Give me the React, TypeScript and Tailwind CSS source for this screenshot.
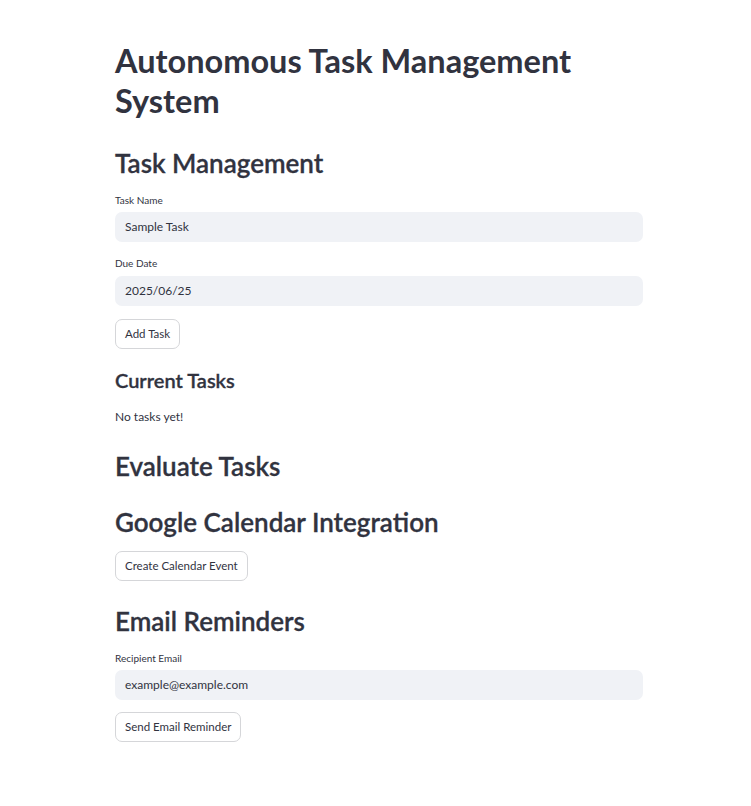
import React from "react";

const font = { fontFamily: "Lato, 'Noto Sans', sans-serif" };

function Label({ children }: { children: React.ReactNode }) {
  return <div className="text-[10px] leading-[14px] text-[#31333f] h-[14px]">{children}</div>;
}

function Input({ value }: { value: string }) {
  return (
    <div className="mt-[5px] h-[30px] w-full rounded-[7px] bg-[#f0f2f6] flex items-center px-[10px] text-[12px] text-[#31333f]">
      {value}
    </div>
  );
}

function Button({ children }: { children: React.ReactNode }) {
  return (
    <div className="inline-flex h-[30px] items-center rounded-[7px] border border-[#d5d6d9] bg-white px-[9px] text-[11.5px] text-[#31333f]">
      {children}
    </div>
  );
}

export default function App() {
  return (
    <div className="min-h-[806px] w-[751px] bg-white" style={font}>
      <div className="ml-[115px] w-[528px] pt-[41px] text-[#31333f]">
        <h1 className="text-[32.5px] font-bold leading-[40px]">Autonomous Task Management System</h1>
        <h2 className="mt-[26px] text-[26px] font-semibold leading-[32px] [-webkit-text-stroke:0.3px_#31333f]">Task Management</h2>
        <div className="mt-[14px]">
          <Label>Task Name</Label>
          <Input value="Sample Task" />
        </div>
        <div className="mt-[14px]">
          <Label>Due Date</Label>
          <div className="h-[1px]" />
          <Input value="2025/06/25" />
        </div>
        <div className="mt-[13px]">
          <Button>Add Task</Button>
        </div>
        <h3 className="mt-[17px] text-[20px] font-semibold leading-[28px] [-webkit-text-stroke:0.3px_#31333f]">Current Tasks</h3>
        <p className="mt-[15px] text-[12px] leading-[16px]">No tasks yet!</p>
        <h2 className="mt-[25px] text-[26px] font-semibold leading-[32px] [-webkit-text-stroke:0.3px_#31333f]">Evaluate Tasks</h2>
        <h2 className="mt-[24px] text-[26px] font-semibold leading-[32px] [-webkit-text-stroke:0.3px_#31333f]">Google Calendar Integration</h2>
        <div className="mt-[13px]">
          <Button>Create Calendar Event</Button>
        </div>
        <h2 className="mt-[24px] text-[26px] font-semibold leading-[32px] [-webkit-text-stroke:0.3px_#31333f]">Email Reminders</h2>
        <div className="mt-[14px]">
          <Label>Recipient Email</Label>
          <Input value="example@example.com" />
        </div>
        <div className="mt-[12px]">
          <Button>Send Email Reminder</Button>
        </div>
      </div>
    </div>
  );
}
